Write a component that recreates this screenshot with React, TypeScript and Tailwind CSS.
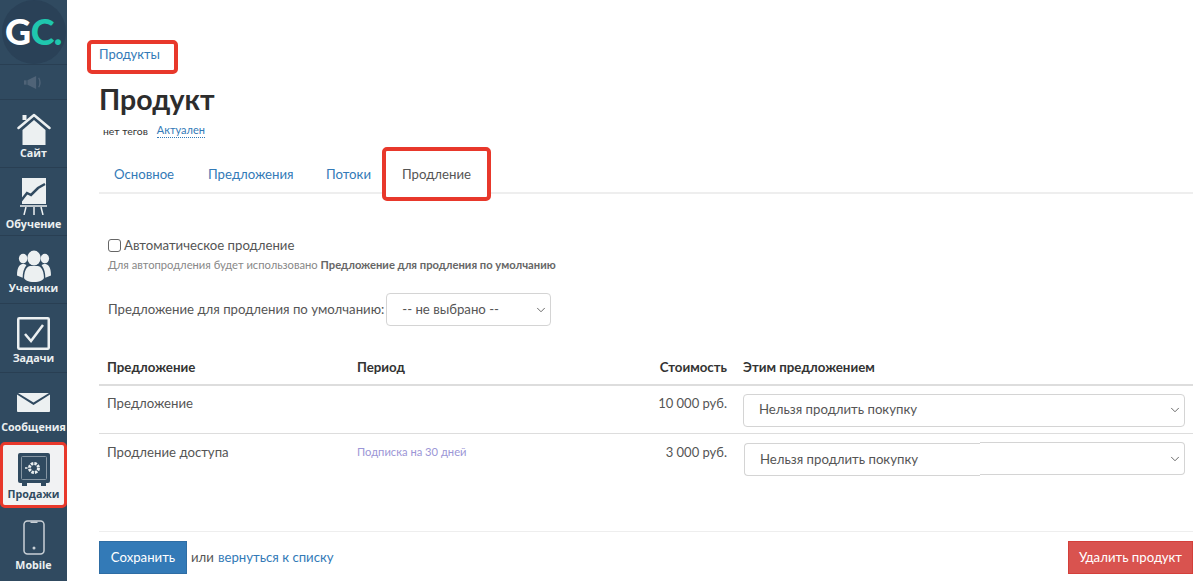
import { ChevronDown } from 'lucide-react';
import type { ReactNode } from 'react';

const HomeIcon = () => (
  <svg width="34" height="32" viewBox="0 0 34 32" fill="none">
    <path d="M5.500 17 L17 7 L28.500 17 V32 H5.500 Z" fill="#ecf0f1" />
    <path d="M1.500 15 L17 2 L32.500 15" stroke="#ecf0f1" strokeWidth="2.500" strokeLinecap="round" strokeLinejoin="round" />
    <rect x="5.500" y="2" width="4" height="5" fill="#ecf0f1" />
  </svg>
);

const BoardIcon = () => (
  <svg width="27" height="37" viewBox="0 0 27 37" fill="none">
    <rect x="2" y="0" width="24" height="26" fill="#ecf0f1" />
    <path d="M0 24 L7 15 L11 17 L18 10 L25 6" stroke="#304a60" strokeWidth="2.500" fill="none" />
    <path d="M0 28 H27" stroke="#ecf0f1" strokeWidth="1.500" />
    <path d="M6 29 L4 37 M14 29 V37 M21 29 L23 37" stroke="#ecf0f1" strokeWidth="1.500" />
  </svg>
);

const UsersIcon = () => (
  <svg width="34" height="32" viewBox="0 0 36 30" preserveAspectRatio="none" fill="#ecf0f1">
    <circle cx="6.500" cy="8" r="4.500" />
    <circle cx="29.500" cy="8" r="4.500" />
    <path d="M0 24 C0 16 3 13 7 13 L10 14 C7 18 6 21 6 26 Z" />
    <path d="M36 24 C36 16 33 13 29 13 L26 14 C29 18 30 21 30 26 Z" />
    <circle cx="18" cy="7.500" r="7" />
    <path d="M7.500 26 C7.500 19 11 15 14 15 H22 C25 15 28.500 19 28.500 26 C28.500 28 24 30 18 30 C12 30 7.500 28 7.500 26 Z" />
  </svg>
);

const TaskIcon = () => (
  <svg width="33" height="33" viewBox="0 0 33 33" fill="none">
    <rect x="1.250" y="1.250" width="30.500" height="30.500" rx="1" stroke="#ecf0f1" strokeWidth="2.500" />
    <path d="M8 17 L14 24 L26 8" stroke="#ecf0f1" strokeWidth="2.500" />
  </svg>
);

const MailIcon = () => (
  <svg width="33" height="19" viewBox="0 0 33 24" preserveAspectRatio="none" fill="#ecf0f1">
    <path d="M1 0 H32 L16.500 12 Z" />
    <path d="M0 2 L16.500 15 L33 2 V23 Q33 24 32 24 H1 Q0 24 0 23 Z" />
  </svg>
);

const SafeIcon = () => (
  <svg width="32" height="34" viewBox="0 0 32 34" fill="none">
    <rect x="0" y="0" width="32" height="30" rx="2" fill="#304a60" />
    <rect x="3.500" y="3.500" width="25" height="23" rx="1" stroke="#8796a3" strokeWidth="1" />
    <rect x="4" y="30" width="5" height="3" fill="#304a60" />
    <rect x="23" y="30" width="5" height="3" fill="#304a60" />
    <circle cx="16" cy="15" r="4.500" stroke="#ecf0f1" strokeWidth="3" strokeDasharray="2.500 1" />
    <path d="M7 15 H9.500" stroke="#ecf0f1" strokeWidth="1.500" />
  </svg>
);

const PhoneIcon = () => (
  <svg width="22" height="35" viewBox="0 0 22 35" fill="none">
    <rect x="1" y="1" width="20" height="33" rx="3.500" stroke="#c9d0d6" strokeWidth="1.500" />
    <path d="M7.500 1.500 H14.500 V3 H7.500 Z" fill="#c9d0d6" />
    <circle cx="11" cy="28" r="1.500" fill="#c9d0d6" />
  </svg>
);

const SpeakerIcon = () => (
  <svg width="21" height="13" viewBox="0 0 22 15" fill="#4f6377">
    <rect x="0" y="5" width="3" height="5" />
    <path d="M4 5 L14 0 V15 L4 10 Z" />
    <path d="M17 2 Q20 7.500 17 13" stroke="#4f6377" strokeWidth="1.500" fill="none" />
  </svg>
);

const NavItem = ({ icon, label, className, labelClass }: { icon: ReactNode; label: string; className: string; labelClass: string }) => (
  <div className={`flex flex-col items-center justify-end border-b border-[#293f53] text-[#ecf0f1] ${className}`}>
    {icon}
    <span className={`text-[10.7px] leading-[14px] font-bold ${labelClass}`}>{label}</span>
  </div>
);

const Sidebar = () => (
  <aside className="w-[67px] shrink-0 flex flex-col bg-[#304a60] overflow-hidden">
    <div className="h-[65px] shrink-0 border-b border-[#293f53] flex items-center justify-center">
      <div className="w-[64px] h-[64px] pb-[3px] rounded-full bg-[#2a4157] flex items-center justify-center text-[36px] font-black tracking-[-0.5px] font-['Lato',sans-serif]">
        <span className="text-white">G</span>
        <span className="text-[#1fc7ae]">C.</span>
      </div>
    </div>
    <div className="h-[35px] shrink-0 border-b border-[#293f53] flex items-center justify-center">
      <SpeakerIcon />
    </div>
    <NavItem icon={<HomeIcon />} label="Сайт" className="h-[68px] pb-[7px]" labelClass="mt-[1px]" />
    <NavItem icon={<BoardIcon />} label="Обучение" className="h-[68px] pb-[4px]" labelClass="mt-[2px]" />
    <NavItem icon={<UsersIcon />} label="Ученики" className="h-[68px] pb-[8px]" labelClass="mt-[-1px]" />
    <NavItem icon={<TaskIcon />} label="Задачи" className="h-[69px] pb-[7px]" labelClass="mt-[1px]" />
    <NavItem icon={<MailIcon />} label="Сообщения" className="h-[68px] pb-[7px] !border-b-0" labelClass="mt-[8px]" />
    <div className="h-[66px] mt-[1px] shrink-0 bg-[#f1f2f3] border-[3px] border-[#e8382b] rounded-[5px] flex flex-col items-center justify-end pb-[4px] text-[#304a60]">
      <SafeIcon />
      <span className="text-[10.7px] leading-[14px] font-bold">Продажи</span>
    </div>
    <NavItem icon={<PhoneIcon />} label="Mobile" className="h-[71px] pb-[7px] !border-b-0" labelClass="mt-[3px]" />
  </aside>
);

const RenewSelect = () => (
  <div className="h-[33px] flex items-center justify-between rounded-[4px] border border-[#d4d4d4] pl-[15px] pr-[2px] text-[13.2px] text-[#555]">
    <span>Нельзя продлить покупку</span>
    <ChevronDown className="w-[14px] h-[14px] text-[#555]" strokeWidth={1.5} />
  </div>
);

// второй селект в оригинале склеен из двух кусков со сдвигом в 1px
const SplitSelect = () => (
  <div className="flex ml-px text-[13.2px] text-[#555]">
    <div className="w-[236px] h-[33px] mt-px flex items-center rounded-l-[4px] border border-r-0 border-[#d4d4d4] pl-[15px]">
      Нельзя продлить покупку
    </div>
    <div className="flex-1 h-[33px] flex items-center justify-end rounded-r-[4px] border border-l-0 border-[#d4d4d4] pr-[2px]">
      <ChevronDown className="w-[14px] h-[14px] text-[#555]" strokeWidth={1.5} />
    </div>
  </div>
);

const App = () => (
  <div className="w-[1199px] h-[581px] flex overflow-hidden bg-white font-['Open_Sans',sans-serif] text-[#555]">
    <Sidebar />
    <main className="flex-1 pl-[32px] pr-[6px] font-['Lato',sans-serif]">
      <div className="mt-[40px] ml-[-12px] w-[91px] h-[34px] border-[4px] border-[#e8382b] rounded-[5px] pl-[8px] pb-[4px] flex items-center text-[13px] text-[#337ab7]">
        Продукты
      </div>
      <h1 className="mt-[7px] text-[28.5px] leading-[36px] font-bold text-[#2d2d2d]">Продукт</h1>
      <div className="mt-[6px] ml-[4px] flex items-center gap-[9px] leading-[14px]">
        <span className="text-[10.4px] text-[#333]">нет тегов</span>
        <span className="text-[11px] text-[#337ab7] border-b border-dotted border-[#337ab7]">Актуален</span>
      </div>
      <div className="mt-[9px] h-[47px] flex items-end border-b-2 border-[#eee] text-[13.2px] text-[#337ab7]">
        <span className="h-[45px] pl-[15px] leading-[54px] w-[109px]">Основное</span>
        <span className="h-[45px] leading-[54px] w-[118px]">Предложения</span>
        <span className="h-[45px] leading-[54px] w-[56px]">Потоки</span>
        <div className="h-[54px] w-[109px] mb-[-9px] pt-[2px] border-[4px] border-[#e8382b] rounded-[5px] bg-white flex items-center justify-center text-[#555]">
          Продление
        </div>
      </div>

      <label className="mt-[42px] ml-[9px] flex items-center gap-[3px] text-[13.2px] leading-[18px]">
        <span className="w-[13px] h-[13px] rounded-[3px] border border-[#666] bg-white" />
        Автоматическое продление
      </label>
      <p className="mt-[4px] ml-[9px] text-[11.2px] leading-[14px] text-[#888]">
        Для автопродления будет использовано <b className="text-[#666]">Предложение для продления по умолчанию</b>
      </p>
      <div className="mt-[21px] ml-[9px] flex items-center gap-[2px] text-[13.2px]">
        <span>Предложение для продления по умолчанию:</span>
        <div className="w-[165px] h-[33px] flex items-center justify-between rounded-[4px] border border-[#d4d4d4] pl-[15px] pr-[2px]">
          <span>-- не выбрано --</span>
          <ChevronDown className="w-[14px] h-[14px]" strokeWidth={1.5} />
        </div>
      </div>

      <table className="mt-[25px] w-full table-fixed border-collapse text-[13.2px]">
        <colgroup>
          <col className="w-[250px]" />
          <col className="w-[250px]" />
          <col className="w-[136px]" />
          <col />
        </colgroup>
        <thead>
          <tr className="border-b-2 border-[#ddd] text-[#333] text-[13.3px]">
            <th className="h-[34px] pl-[8px] text-left font-bold">Предложение</th>
            <th className="pl-[8px] text-left font-bold">Период</th>
            <th className="pr-[8px] text-right font-bold">Стоимость</th>
            <th className="pl-[8px] text-left font-bold">Этим предложением</th>
          </tr>
        </thead>
        <tbody>
          <tr className="border-b border-[#ddd]">
            <td className="h-[48px] pl-[8px] pb-[11px]">Предложение</td>
            <td />
            <td className="pr-[8px] pb-[11px] text-right text-[13px]">10 000 руб.</td>
            <td className="pl-[8px] pr-[8px] pt-[2px]"><RenewSelect /></td>
          </tr>
          <tr>
            <td className="h-[50px] pl-[8px] pb-[11px]">Продление доступа</td>
            <td className="pl-[8px] pb-[11px] text-[11.2px] text-[#9b96d6]">Подписка на 30 дней</td>
            <td className="pr-[8px] pb-[11px] text-right text-[13px]">3 000 руб.</td>
            <td className="pl-[8px] pr-[8px] pt-[2px]"><SplitSelect /></td>
          </tr>
        </tbody>
      </table>

      <div className="mt-[48px] border-t border-[#eee] pt-[9px] flex items-center justify-between text-[13.2px]">
        <div className="flex items-center gap-[4px]">
          <button className="w-[88px] h-[33px] bg-[#337ab7] border border-[#2e6da4] text-white">Сохранить</button>
          <span>или</span>
          <a className="text-[#337ab7]">вернуться к списку</a>
        </div>
        <button className="w-[125px] h-[33px] bg-[#d9534f] border border-[#d43f3a] text-white">Удалить продукт</button>
      </div>
    </main>
  </div>
);

export default App;
